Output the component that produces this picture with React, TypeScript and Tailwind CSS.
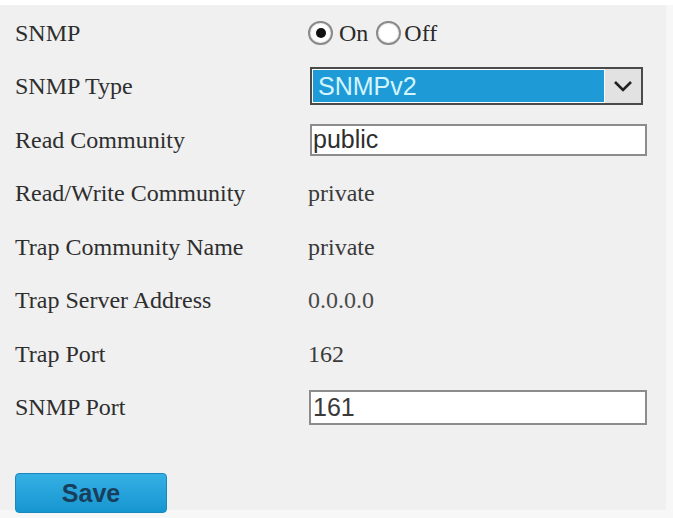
import React from "react";

const serif = { fontFamily: '"Liberation Serif", "Times New Roman", serif' };
const sans = { fontFamily: '"Liberation Sans", Arial, sans-serif' };

function Row({ label, children }: { label: string; children?: React.ReactNode }) {
  return (
    <div className="flex h-[53.5px] items-center">
      <div className="w-[293px] text-[24px] leading-none text-[#2e2e2e]" style={serif}>
        {label}
      </div>
      <div className="flex items-center">{children}</div>
    </div>
  );
}

function Radio({ checked }: { checked?: boolean }) {
  return (
    <span className="flex h-[24px] w-[25px] items-center justify-center rounded-full border-2 border-[#8a8a8a] bg-white shadow-[inset_0_0_2px_rgba(0,0,0,0.25)]">
      {checked && <span className="h-[10px] w-[10px] rounded-full bg-[#111]" />}
    </span>
  );
}

export default function App() {
  return (
    <div className="h-[518px] w-[673px] bg-[#f7f7f7]">
      <div className="ml-0 mt-[5px] h-[505px] w-[666px] bg-[#f0f0f0] pl-[15px] pt-[1px]">
        <Row label="SNMP">
          <div className="flex items-center text-[24px] leading-none text-[#2a2a2a]" style={serif}>
            <Radio checked />
            <span className="ml-[6px] mr-[8px]">On</span>
            <Radio />
            <span className="ml-[3px]">Off</span>
          </div>
        </Row>
        <Row label="SNMP Type">
          <div className="ml-[2px] flex h-[38px] w-[333px] border-2 border-[#4a4a4a] bg-white">
            <div
              className="m-[1px] flex flex-1 items-center bg-[#1e9bd7] pl-[5px] text-[25px] leading-none text-[#d4f4ff]"
              style={sans}
            >
              SNMPv2
            </div>
            <div className="flex w-[36px] items-center justify-center bg-[#e2e2e2]">
              <svg width="20" height="12" viewBox="0 0 20 12">
                <path d="M2 2 L10 10 L18 2" fill="none" stroke="#222" strokeWidth="2.6" />
              </svg>
            </div>
          </div>
        </Row>
        <Row label="Read Community">
          <div
            className="ml-[2px] flex h-[32px] w-[337px] items-center border-2 border-[#8c8c8c] bg-white pl-[1px] text-[25px] leading-none text-[#2e2e2e]"
            style={sans}
          >
            public
          </div>
        </Row>
        <Row label="Read/Write Community">
          <span className="text-[24px] leading-none text-[#3a3a3a]" style={serif}>private</span>
        </Row>
        <Row label="Trap Community Name">
          <span className="text-[24px] leading-none text-[#3a3a3a]" style={serif}>private</span>
        </Row>
        <Row label="Trap Server Address">
          <span className="text-[24px] leading-none text-[#4a4a4a]" style={serif}>0.0.0.0</span>
        </Row>
        <Row label="Trap Port">
          <span className="text-[24px] leading-none text-[#3a3a3a]" style={serif}>162</span>
        </Row>
        <Row label="SNMP Port">
          <div
            className="ml-[1px] flex h-[35px] w-[338px] items-center border-2 border-[#8c8c8c] bg-white pl-[2px] text-[25px] leading-none text-[#3a3a3a]"
            style={sans}
          >
            161
          </div>
        </Row>
        <div className="mt-[39px]">
          <button
            className="flex h-[40px] w-[152px] items-center justify-center rounded-[4px] border border-[#1888bd] bg-gradient-to-b from-[#34b0e4] to-[#1596d0] text-[25px] font-bold leading-none text-[#173e5c]"
            style={sans}
          >
            Save
          </button>
        </div>
      </div>
    </div>
  );
}
